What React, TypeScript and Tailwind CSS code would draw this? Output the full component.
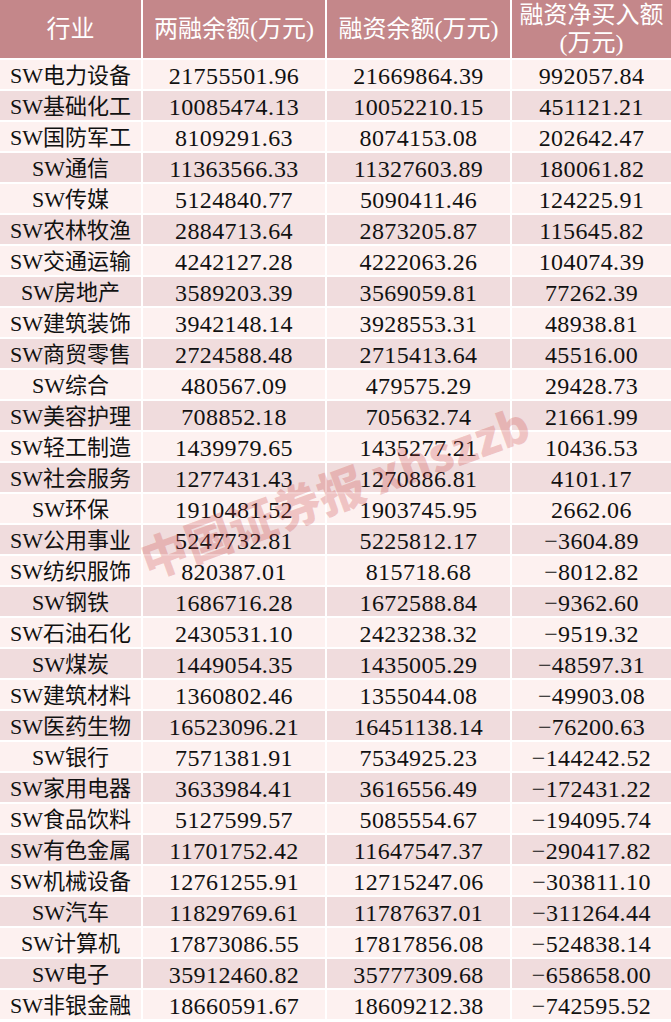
const rows: [string, string, string, string][] = [
  ["SW电力设备", "21755501.96", "21669864.39", "992057.84"],
  ["SW基础化工", "10085474.13", "10052210.15", "451121.21"],
  ["SW国防军工", "8109291.63", "8074153.08", "202642.47"],
  ["SW通信", "11363566.33", "11327603.89", "180061.82"],
  ["SW传媒", "5124840.77", "5090411.46", "124225.91"],
  ["SW农林牧渔", "2884713.64", "2873205.87", "115645.82"],
  ["SW交通运输", "4242127.28", "4222063.26", "104074.39"],
  ["SW房地产", "3589203.39", "3569059.81", "77262.39"],
  ["SW建筑装饰", "3942148.14", "3928553.31", "48938.81"],
  ["SW商贸零售", "2724588.48", "2715413.64", "45516.00"],
  ["SW综合", "480567.09", "479575.29", "29428.73"],
  ["SW美容护理", "708852.18", "705632.74", "21661.99"],
  ["SW轻工制造", "1439979.65", "1435277.21", "10436.53"],
  ["SW社会服务", "1277431.43", "1270886.81", "4101.17"],
  ["SW环保", "1910481.52", "1903745.95", "2662.06"],
  ["SW公用事业", "5247732.81", "5225812.17", "−3604.89"],
  ["SW纺织服饰", "820387.01", "815718.68", "−8012.82"],
  ["SW钢铁", "1686716.28", "1672588.84", "−9362.60"],
  ["SW石油石化", "2430531.10", "2423238.32", "−9519.32"],
  ["SW煤炭", "1449054.35", "1435005.29", "−48597.31"],
  ["SW建筑材料", "1360802.46", "1355044.08", "−49903.08"],
  ["SW医药生物", "16523096.21", "16451138.14", "−76200.63"],
  ["SW银行", "7571381.91", "7534925.23", "−144242.52"],
  ["SW家用电器", "3633984.41", "3616556.49", "−172431.22"],
  ["SW食品饮料", "5127599.57", "5085554.67", "−194095.74"],
  ["SW有色金属", "11701752.42", "11647547.37", "−290417.82"],
  ["SW机械设备", "12761255.91", "12715247.06", "−303811.10"],
  ["SW汽车", "11829769.61", "11787637.01", "−311264.44"],
  ["SW计算机", "17873086.55", "17817856.08", "−524838.14"],
  ["SW电子", "35912460.82", "35777309.68", "−658658.00"],
  ["SW非银金融", "18660591.67", "18609212.38", "−742595.52"],
];

const font = {
  fontFamily: '"Liberation Serif", "Noto Sans CJK SC", serif',
};

function HeaderCell({ children }: { children: React.ReactNode }) {
  return (
    <div className="flex items-center justify-center bg-[#c4878a] text-center text-[24px] leading-[28px] text-white">
      {children}
    </div>
  );
}

export default function App() {
  return (
    <div className="relative w-[671px] overflow-hidden bg-white" style={font}>
      <div className="grid grid-cols-[141px_182px_183px_1fr] grid-rows-[58px] auto-rows-[29px] gap-[2px] text-[#111]">
        <HeaderCell>行业</HeaderCell>
        <HeaderCell>两融余额(万元)</HeaderCell>
        <HeaderCell>融资余额(万元)</HeaderCell>
        <HeaderCell>
          <span>
            融资净买入额
            <br />
            (万元)
          </span>
        </HeaderCell>

        {rows.map((r, i) =>
          r.map((cell, j) => (
            <div
              key={`${i}-${j}`}
              className={`flex items-center justify-center whitespace-nowrap pt-[3px] leading-[26px] ${
                j === 0 ? "text-[22px]" : "text-[24px] tracking-[0.4px]"
              } ${i % 2 === 0 ? "bg-[#fdf1f0]" : "bg-[#f0dcdd]"}`}
            >
              {cell}
            </div>
          ))
        )}
      </div>

      {/* watermark */}
      <div
        className="pointer-events-none absolute left-[334px] top-[490px] -translate-x-1/2 -translate-y-1/2 -rotate-[20deg] whitespace-nowrap text-[47px] font-black leading-none text-[#c83c3c]/25"
        style={{ fontFamily: '"Noto Sans CJK SC", "Liberation Sans", sans-serif' }}
      >
        中国证券报 xhszzb
      </div>
    </div>
  );
}
